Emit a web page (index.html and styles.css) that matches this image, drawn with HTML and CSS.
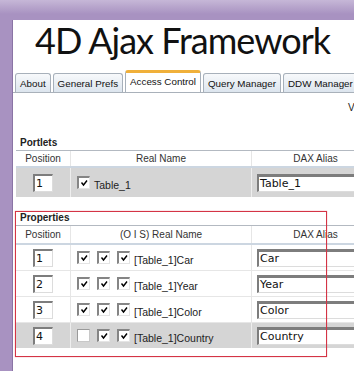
FILE: index.html
```html
<!doctype html>
<html lang="en">
<head>
    <meta charset="UTF-8">
    <title>4D Ajax Framework</title>
    <link rel="stylesheet" href="styles.css">
</head>
<body>
<div class="frame">
    <h1 class="title">4D Ajax Framework</h1>
    <ul class="tabs">
        <li class="tab">About</li>
        <li class="tab">General Prefs</li>
        <li class="tab active">Access Control</li>
        <li class="tab">Query Manager</li>
        <li class="tab">DDW Manager</li>
    </ul>
    <div class="panel">
        <div class="version">Version 1.0</div>

        <div class="section">
            <div class="section-title">Portlets</div>
            <table class="grid">
                <tr>
                    <th class="col-pos">Position</th>
                    <th class="col-name">Real Name</th>
                    <th class="col-alias">DAX Alias</th>
                </tr>
                <tr class="shaded tall">
                    <td class="col-pos"><span class="field small">1</span></td>
                    <td class="col-name">
                        <div class="checks">
                            <span class="check on"><svg viewBox="0 0 10 10"><path d="M2.5 4.5 L4.5 7 L8 2.5"/></svg></span>
                            <span class="label">Table_1</span>
                        </div>
                    </td>
                    <td class="col-alias"><span class="field wide">Table_1</span></td>
                </tr>
            </table>
        </div>

        <div class="section props">
            <div class="section-title">Properties</div>
            <table class="grid">
                <tr>
                    <th class="col-pos">Position</th>
                    <th class="col-name">(O I S) Real Name</th>
                    <th class="col-alias">DAX Alias</th>
                </tr>
                <tr>
                    <td class="col-pos"><span class="field small">1</span></td>
                    <td class="col-name">
                        <div class="checks">
                            <span class="check on"><svg viewBox="0 0 10 10"><path d="M2.5 4.5 L4.5 7 L8 2.5"/></svg></span>
                            <span class="check on"><svg viewBox="0 0 10 10"><path d="M2.5 4.5 L4.5 7 L8 2.5"/></svg></span>
                            <span class="check on"><svg viewBox="0 0 10 10"><path d="M2.5 4.5 L4.5 7 L8 2.5"/></svg></span>
                            <span class="label">[Table_1]Car</span>
                        </div>
                    </td>
                    <td class="col-alias"><span class="field wide">Car</span></td>
                </tr>
                <tr>
                    <td class="col-pos"><span class="field small">2</span></td>
                    <td class="col-name">
                        <div class="checks">
                            <span class="check on"><svg viewBox="0 0 10 10"><path d="M2.5 4.5 L4.5 7 L8 2.5"/></svg></span>
                            <span class="check on"><svg viewBox="0 0 10 10"><path d="M2.5 4.5 L4.5 7 L8 2.5"/></svg></span>
                            <span class="check on"><svg viewBox="0 0 10 10"><path d="M2.5 4.5 L4.5 7 L8 2.5"/></svg></span>
                            <span class="label">[Table_1]Year</span>
                        </div>
                    </td>
                    <td class="col-alias"><span class="field wide">Year</span></td>
                </tr>
                <tr>
                    <td class="col-pos"><span class="field small">3</span></td>
                    <td class="col-name">
                        <div class="checks">
                            <span class="check on"><svg viewBox="0 0 10 10"><path d="M2.5 4.5 L4.5 7 L8 2.5"/></svg></span>
                            <span class="check on"><svg viewBox="0 0 10 10"><path d="M2.5 4.5 L4.5 7 L8 2.5"/></svg></span>
                            <span class="check on"><svg viewBox="0 0 10 10"><path d="M2.5 4.5 L4.5 7 L8 2.5"/></svg></span>
                            <span class="label">[Table_1]Color</span>
                        </div>
                    </td>
                    <td class="col-alias"><span class="field wide">Color</span></td>
                </tr>
                <tr class="shaded">
                    <td class="col-pos"><span class="field small">4</span></td>
                    <td class="col-name">
                        <div class="checks">
                            <span class="check off"></span>
                            <span class="check on"><svg viewBox="0 0 10 10"><path d="M2.5 4.5 L4.5 7 L8 2.5"/></svg></span>
                            <span class="check on"><svg viewBox="0 0 10 10"><path d="M2.5 4.5 L4.5 7 L8 2.5"/></svg></span>
                            <span class="label">[Table_1]Country</span>
                        </div>
                    </td>
                    <td class="col-alias"><span class="field wide">Country</span></td>
                </tr>
            </table>
            <div class="highlight"></div>
        </div>
    </div>
</div>
</body>
</html>
```

FILE: styles.css
```css
html, body {
    overflow: hidden;
}

body {
    margin: 0;
    height: 371px;
    background: linear-gradient(#c6b7d7, #a892c1 14px);
    font-family: "Liberation Sans", Arial, sans-serif;
    color: #222;
}

.frame {
    margin: 20px 0 0 12px;
    width: 600px;
    height: 351px;
    background: #fff;
    border-left: 1px solid #8a74a5;
}

.title {
    margin: 1px 0 0 0;
    padding-left: 22px;
    font-family: Lato, "Open Sans", sans-serif;
    font-weight: normal;
    font-size: 36px;
    line-height: 40px;
    letter-spacing: -1px;
    color: #111;
}

.tabs {
    display: flex;
    align-items: flex-end;
    gap: 2px;
    margin: 10px 0 0 0;
    padding: 0 0 0 2px;
    list-style: none;
    border-bottom: 1px solid #a9b1ba;
}

.tab {
    height: 18px;
    padding: 0 4px;
    border: 1px solid #a7b0ba;
    border-bottom: none;
    border-radius: 3px 3px 0 0;
    background: linear-gradient(#f7f9fb, #dce5ee);
    font-size: 9.8px;
    line-height: 19px;
    color: #111;
    white-space: nowrap;
}

.tab.active {
    height: 19px;
    background: #fff;
    border-top: 3px solid #f0b03a;
    line-height: 18px;
}

.panel {
    padding-left: 3px;
}

.version {
    margin: 9px 0 0 332px;
    font-size: 10px;
    line-height: 12px;
    white-space: nowrap;
}

.section {
    margin-top: 23px;
}

.section-title {
    padding-left: 4px;
    font-size: 10px;
    font-weight: bold;
    line-height: 12px;
}

.grid {
    margin-top: 1px;
    border-collapse: collapse;
    table-layout: fixed;
    width: 361px;
    font-size: 10px;
    color: #333;
}

.grid th {
    height: 15px;
    padding: 0;
    font-weight: normal;
    border-top: 1px solid #b3b9c1;
    border-bottom: 2px solid #ccd6e1;
    text-align: center;
}

.props .grid th {
    height: 17px;
}

.grid th + th,
.grid td + td {
    border-left: 1px solid #e6e6e6;
}

.grid td {
    height: 25px;
    padding: 0;
    border-top: 1px solid #e6e6e6;
    vertical-align: middle;
    overflow: hidden;
}

.grid tr:nth-child(2) td {
    border-top-color: #fff;
}

.shaded td {
    background: #d5d5d5;
}

.shaded td + td {
    border-left-color: #eee;
}

.tall td {
    height: 29px;
}

.col-pos {
    width: 54px;
    text-align: center;
}

.col-name {
    width: 180px;
}

.grid td.col-name {
    padding-left: 6px;
}

.col-alias {
    width: 127px;
}

.grid td.col-alias {
    padding-left: 5px;
}

.field {
    display: inline-block;
    box-sizing: border-box;
    height: 18px;
    background: #fff;
    border-top: 2px solid #7d7d7d;
    border-left: 2px solid #7d7d7d;
    border-right: 1px solid #dcdcdc;
    border-bottom: 1px solid #dcdcdc;
    font-family: "DejaVu Sans", Verdana, sans-serif;
    font-size: 11px;
    line-height: 15px;
    color: #111;
    text-align: left;
    vertical-align: middle;
    padding-left: 1px;
    white-space: nowrap;
}

.field.small {
    width: 20px;
}

.field.wide {
    width: 118px;
    border-top-width: 3px;
    line-height: 14px;
}

.checks {
    display: flex;
    align-items: center;
    gap: 7px;
}

.check {
    box-sizing: border-box;
    width: 13px;
    height: 13px;
    background: #fff;
    border-top: 2px solid #858585;
    border-left: 2px solid #858585;
    border-right: 1px solid #e4e4e4;
    border-bottom: 1px solid #e4e4e4;
}

.check svg {
    display: block;
    width: 10px;
    height: 10px;
    fill: none;
    stroke: #000;
    stroke-width: 1.4;
}

.check.off {
    border-color: #9a9a9a #c8c8c8 #c8c8c8 #9a9a9a;
    border-width: 1px;
}

.label {
    margin: 4px 0 0 -3px;
    font-size: 10.5px;
    color: #222;
    white-space: nowrap;
}

.props {
    position: relative;
    margin-top: 15px;
}

.highlight {
    position: absolute;
    top: -1px;
    left: -1px;
    width: 310px;
    height: 144px;
    border: 1px solid #d43445;
    box-shadow: 0 0 1px rgba(212, 52, 69, 0.6);
    pointer-events: none;
}
```
